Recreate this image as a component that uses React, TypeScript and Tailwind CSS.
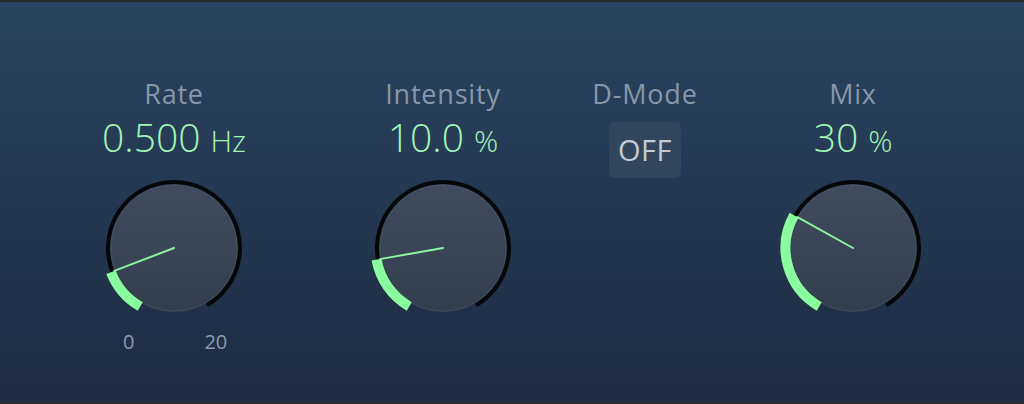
import React from "react";

const CX = 75;
const CY = 75;

function pt(angle: number, r: number) {
  const a = (angle * Math.PI) / 180;
  return [CX + r * Math.sin(a), CY - r * Math.cos(a)];
}

function arc(a0: number, a1: number, r: number) {
  const [x0, y0] = pt(a0, r);
  const [x1, y1] = pt(a1, r);
  let sweep = a1 - a0;
  if (sweep < 0) sweep += 360;
  const large = sweep > 180 ? 1 : 0;
  return `M ${x0} ${y0} A ${r} ${r} 0 ${large} 1 ${x1} ${y1}`;
}

function Knob({ angle, id }: { angle: number; id: string }) {
  const [px, py] = pt(angle, 64);
  return (
    <svg width="150" height="150" viewBox="0 0 150 150">
      <defs>
        <linearGradient id={`kb-${id}`} x1="0" y1="0" x2="0" y2="1">
          <stop offset="0" stopColor="#404c5d" />
          <stop offset="1" stopColor="#333e4d" />
        </linearGradient>
      </defs>
      <circle cx={CX} cy={CY} r={64} fill={`url(#kb-${id})`} />
      <circle cx={CX} cy={CY} r={63} fill="none" stroke="#4c586a" strokeWidth="1" opacity="0.5" />
      <path d={arc(210, 150, 66)} fill="none" stroke="#050608" strokeWidth="4" />
      <path d={arc(210, angle, 67.5)} fill="none" stroke="#8afd9f" strokeWidth="10" />
      <line x1={CX} y1={CY} x2={px} y2={py} stroke="#8cf3a0" strokeWidth="2" strokeLinecap="round" />
    </svg>
  );
}

const font = { fontFamily: '"Open Sans", "Liberation Sans", sans-serif' };

function Label({ children }: { children: React.ReactNode }) {
  return (
    <div className="text-[27px] leading-[30px] text-[#8797a8] tracking-[0.8px] whitespace-nowrap" style={font}>
      {children}
    </div>
  );
}

function Value({ num, unit }: { num: string; unit: string }) {
  return (
    <div className="mt-[8px] h-[40px] leading-[40px] text-[#a0f5b3] whitespace-nowrap" style={font}>
      <span className="text-[39px] font-light">{num}</span>
      <span className="text-[30px] font-light ml-[10px]">{unit}</span>
    </div>
  );
}

export default function App() {
  return (
    <div
      className="w-[1024px] h-[404px] border-t-2 border-b-2 border-[#2b2b2d] bg-gradient-to-b from-[#2a4461] to-[#1e2b42] overflow-hidden"
      style={font}
    >
      <div className="flex pt-[77px]">
        <div className="ml-[84px] w-[180px] flex flex-col items-center">
          <Label>Rate</Label>
          <Value num="0.500" unit="Hz" />
          <div className="mt-[16px]">
            <Knob angle={249} id="rate" />
          </div>
          <div className="mt-[9px] w-[150px] flex text-[20px] leading-[20px] text-[#8a9aab]">
            <span className="ml-[24px]">0</span>
            <span className="ml-[70px]">20</span>
          </div>
        </div>
        <div className="ml-[89px] w-[180px] flex flex-col items-center">
          <Label>Intensity</Label>
          <Value num="10.0" unit="%" />
          <div className="mt-[16px]">
            <Knob angle={260} id="int" />
          </div>
        </div>
        <div className="ml-[22px] w-[180px] flex flex-col items-center">
          <Label>D-Mode</Label>
          <div className="mt-[13px] w-[72px] h-[56px] rounded-[5px] bg-[#33455b] flex items-center justify-center text-[29px] tracking-[0.5px] text-[#c3cad3]">
            OFF
          </div>
        </div>
        <div className="ml-[28px] w-[180px] flex flex-col items-center">
          <Label>Mix</Label>
          <Value num="30" unit="%" />
          <div className="mt-[16px]">
            <Knob angle={299} id="mix" />
          </div>
        </div>
      </div>
    </div>
  );
}
